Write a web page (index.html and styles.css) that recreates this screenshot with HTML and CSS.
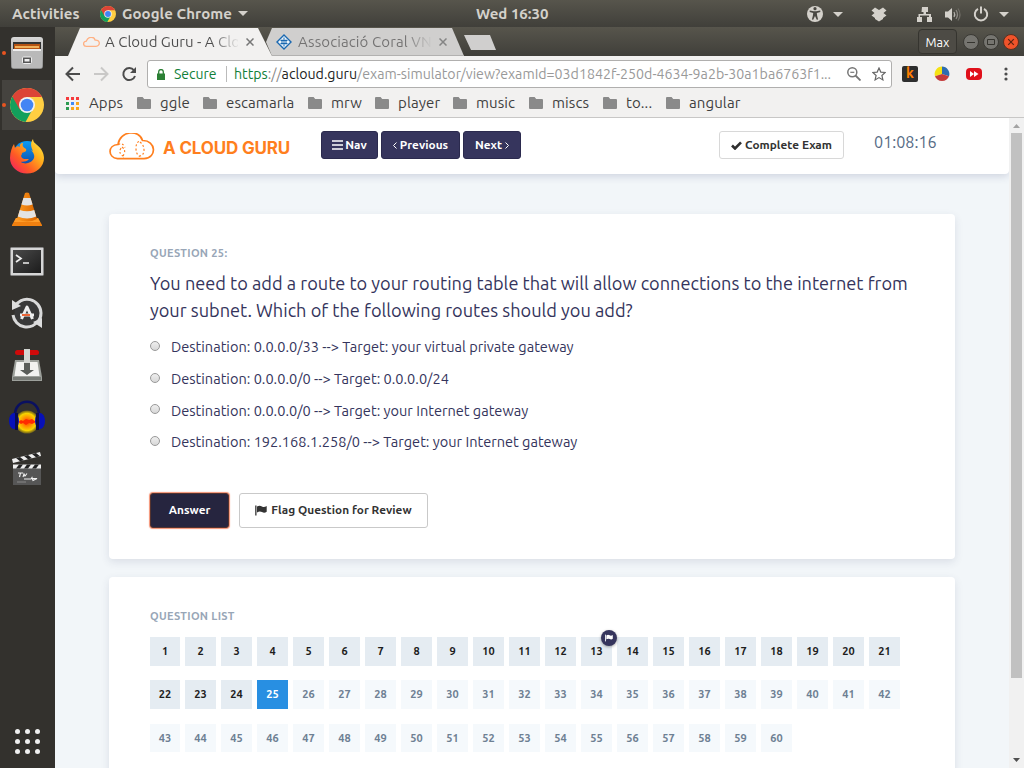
FILE: index.html
```html
<!DOCTYPE html>
<html lang="en">
<head>
<meta charset="utf-8">
<title>A Cloud Guru - Exam Simulator</title>
<link rel="stylesheet" href="styles.css">
</head>
<body>
<svg class="defs" width="0" height="0">
  <defs>
    <symbol id="chrome" viewBox="0 0 34 34">
      <circle cx="17" cy="17" r="17" fill="#ffce42"/>
      <path d="M17 17L2.3 8.5A17 17 0 0 0 15.5 33.9L23 20.5z" fill="#12a05c"/>
      <path d="M17 17L9.6 21.2L2.3 8.5A17 17 0 0 1 32 9H17z" fill="#dc4437"/>
      <circle cx="17" cy="17" r="8" fill="#f1f1f1"/>
      <circle cx="17" cy="17" r="6.3" fill="#4285f4"/>
    </symbol>
    <symbol id="folder" viewBox="0 0 14 12">
      <path d="M1 0h4.600l1.600 2H13a1 1 0 0 1 1 1v8a1 1 0 0 1-1 1H1a1 1 0 0 1-1-1V1a1 1 0 0 1 1-1z" fill="#8a8a8a"/>
    </symbol>
    <symbol id="flag" viewBox="0 0 12 11">
      <path d="M0.2 0.4h1.3v10.2H0.2zM2 1.6C4 .4 5.400 .6 7 1.500S10 2 11.700 1v5.800C10 7.900 8.600 7.900 7 7.100S4 6.300 2 7.500z" fill="currentColor"/>
    </symbol>
    <linearGradient id="steel" x1="0" y1="0" x2="0" y2="1"><stop offset="0" stop-color="#d8d8d8"/><stop offset="1" stop-color="#8b8b8b"/></linearGradient>
    <linearGradient id="fox" x1="1" y1="0" x2="0" y2="1"><stop offset="0" stop-color="#fff04a"/><stop offset=".35" stop-color="#ffb01c"/><stop offset=".65" stop-color="#ff5b24"/><stop offset="1" stop-color="#f0146e"/></linearGradient>
    <linearGradient id="globe" x1="0" y1="0" x2="0" y2="1"><stop offset="0" stop-color="#0a9cf5"/><stop offset="1" stop-color="#123f9c"/></linearGradient>
    <linearGradient id="cone" x1="0" y1="0" x2="1" y2="0"><stop offset="0" stop-color="#ff9a1e"/><stop offset="1" stop-color="#d96500"/></linearGradient>
    <linearGradient id="screen" x1="0" y1="0" x2="1" y2="1"><stop offset="0" stop-color="#4a4a4a"/><stop offset="1" stop-color="#1c1c1c"/></linearGradient>
    <radialGradient id="wave"><stop offset="0" stop-color="#ff3a00"/><stop offset=".45" stop-color="#ff9a00"/><stop offset=".75" stop-color="#f7d400"/><stop offset="1" stop-color="#c9a800" stop-opacity=".4"/></radialGradient>
  </defs>
</svg>

<header class="panel">
  <span class="panel-activities">Activities</span>
  <svg class="panel-chrome" width="16" height="16"><use href="#chrome"/></svg>
  <span class="panel-app">Google Chrome</span>
  <svg class="caret" width="10" height="5" viewBox="0 0 10 5"><path d="M0 0h10L5 5z" fill="#d4d1cb"/></svg>
  <span class="panel-clock">Wed 16:30</span>
  <div class="panel-tray">
    <svg width="211" height="22" viewBox="0 0 211 22">
      <g fill="#d4d1cb">
        <circle cx="9" cy="11" r="8"/>
        <path d="M27 9h10l-5 5z"/>
        <path d="M69 4.500l4 2.500 4-2.500 3.500 3-3 2.500 3 2.500-3.500 2.500v1l-4 2.500-4-2.500v-1l-3.500-2.500 3-2.500-3-2.500z"/>
        <path d="M116 4h6v5h-2v2h5v3h1v5h-5v-5h2v-1.500h-9V14h2v5h-5v-5h1.500v-3h5V9h-2z"/>
        <path d="M139 8.500h3l4-3.500v13l-4-3.500h-3z"/>
        <path d="M193 9h10l-5 5z"/>
      </g>
      <g fill="#4a4842"><circle cx="9" cy="5.700" r="1.600"/><path d="M3.800 7.500l4 .8h2.400l4-.8.200 1.400-3.600 1 .3 2.700 1 3.800-1.300.4L9 13l-1.800 3.800-1.300-.4 1-3.800.3-2.700-3.600-1z"/></g>
      <g fill="none" stroke="#b5b2ac" stroke-width="1.200"><path d="M148 9q1.500 2.500 0 5"/><path d="M150 7q3 4.500 0 9" stroke="#8d8a84"/><path d="M152 5.500q4 6 0 12" stroke="#706d66"/></g>
      <path d="M172 5.800a6.200 6.200 0 1 0 6 0M175 3.500v7" fill="none" stroke="#d4d1cb" stroke-width="2"/>
    </svg>
  </div>
</header>

<div class="desktop">
  <nav class="launcher">
    <div class="dock running">
      <svg width="34" height="34" viewBox="0 0 34 34"><rect x="1" y="1" width="32" height="32" rx="3" fill="url(#steel)"/><path d="M3 6h28v9H3z" fill="#333"/><path d="M4 8h26v7H4z" fill="#b65312"/><path d="M5 10h24v2H5z" fill="#f0b05a"/><path d="M3 13h28v3H3z" fill="#eee"/><path d="M2 15h30v16q0 1-1 1H3q-1 0-1-1z" fill="#b9b9b9"/><rect x="12.500" y="21" width="9" height="6.500" rx="1" fill="#555" stroke="#eee"/><path d="M14.500 23h5v2.500h-5z" fill="#eee"/></svg>
    </div>
    <div class="dock running active">
      <svg width="34" height="34"><use href="#chrome"/></svg>
    </div>
    <div class="dock dock-up">
      <svg width="34" height="36" viewBox="0 0 34 36"><circle cx="17" cy="17" r="14" fill="url(#globe)"/><path d="M23 1c0 3 2 4 4 6 4 3 7 8 7 13a17 15.500 0 0 1-34 0C0 14 2 9 4 6l1 4c2-2 3-2 5-1-1-2 1-4 3-4-1 3 0 4 3 6 1 2-1 3-4 4 0 2-1 2-1 3 1 4 5 3 8 3-3 4-7 2-8 3 4 3 11 1 13-4 1-3-1-6-3-8l2 1C21 9 20 5 23 1z" fill="url(#fox)"/></svg>
    </div>
    <div class="dock">
      <svg width="32" height="34" viewBox="0 0 32 34"><path d="M5 26h22l4 7v1H1v-1z" fill="#f08010"/><path d="M5 26h22l2 4H3z" fill="#ff9c28"/><path d="M14 1q2-1 4 0l8 26q-10 5-20 0z" fill="url(#cone)"/><path d="M12.400 6h7.200l2 6.500q-5.600 2-11.200 0zM8.800 18q7.200 2.500 14.400 0l2 6.500q-9 4-18.400 0z" fill="#e3e3e3"/></svg>
    </div>
    <div class="dock dock-down">
      <svg width="34" height="29" viewBox="0 0 34 29"><rect x=".5" y=".5" width="33" height="28" rx="1" fill="#d6d6d6" stroke="#888"/><rect x="3" y="3" width="28" height="23" fill="url(#screen)"/><path d="M6 8l5 3.500L6 15M13 16h6" fill="none" stroke="#eee" stroke-width="1.700"/></svg>
    </div>
    <div class="dock">
      <svg width="34" height="34" viewBox="0 0 34 34"><circle cx="17" cy="17" r="12.500" fill="#393939"/><path d="M4.500 11a14 14 0 0 1 26.500 6q0 5-3 9M29 24a14 14 0 0 1-26-5" fill="none" stroke="#d9d9d9" stroke-width="3"/><path d="M2 4v10l9-4zM32 32V22l-9 4z" fill="#ddd"/><path d="M11.500 23L17 11l5.500 12" fill="none" stroke="#eee" stroke-width="3" stroke-linejoin="round"/><path d="M10 19h14" stroke="#eee" stroke-width="3"/><path d="M12 19h8" stroke="#e95420" stroke-width="1.800"/></svg>
    </div>
    <div class="dock">
      <svg width="30" height="34" viewBox="0 0 30 34"><path d="M3 12h24l3 17v4H0v-4z" fill="#9da09b"/><path d="M4.500 14h21l2 14h-25z" fill="#f2f2f0"/><path d="M1 29h28v3H1z" fill="#777a75"/><rect x="3" y="2" width="24" height="5" rx="2.500" fill="#cf0a0a"/><path d="M12 1h6v20h-6z" fill="#d4d6d2"/><path d="M12 15h6v7h4l-7 5-7-5h4z" fill="#5a5d59"/></svg>
    </div>
    <div class="dock">
      <svg width="36" height="34" viewBox="0 0 36 34"><ellipse cx="18" cy="22" rx="12" ry="11.500" fill="url(#wave)"/><path d="M9 22l3-2 2 1 3-2 3 1 3-1 4 3-4 2-3-1-3 2-3-2-2 1z" fill="#ff2a00"/><path d="M6 16C5-3 31-3 30 16" fill="none" stroke="#0a1060" stroke-width="2.600"/><ellipse cx="5" cy="21" rx="5" ry="8" fill="#0710b8"/><ellipse cx="31" cy="21" rx="5" ry="8" fill="#0710b8"/><path d="M6 13h3v17H6zM27 13h3v17h-3z" fill="#0a0c4c"/></svg>
    </div>
    <div class="dock">
      <svg width="30" height="34" viewBox="0 0 30 34"><path d="M1 16h28v17H1z" fill="#565656"/><path d="M0 7l28-7 1 4L1 11z" fill="#eee"/><path d="M4 6l4 3.200 4-1-4-3.200zM12 4l4 3.200 4-1-4-3.200zM20 2l4 3.200 4-1-4-3.200z" fill="#222"/><path d="M1 12.500h28v4H1z" fill="#eee"/><path d="M4 16.500l3-4h4l-3 4zM12 16.500l3-4h4l-3 4zM20 16.500l3-4h4l-3 4z" fill="#222"/><path d="M6 21h5M8.500 21l-1 4M11 25l1-3 1 2 2-2.500M12 27h7l1-1.500 1 3 4-2h-6" fill="none" stroke="#f2f2f2" stroke-width="1.100"/><path d="M5 30h9" stroke="#888"/></svg>
    </div>
    <div class="apps-grid"><i></i><i></i><i></i><i></i><i></i><i></i><i></i><i></i><i></i></div>
  </nav>

  <div class="window">
    <div class="titlebar">
      <div class="tab tab-active">
        <svg width="17" height="10" viewBox="0 0 45 26"><path d="M9 24.500C-1 24-1 11 9 10.500 13-2 29-3 32 8c14-2 15 16 2 16.500z" fill="none" stroke="#ffb184" stroke-width="3.500"/></svg>
        <span class="tab-title tab-title-first">A Cloud Guru - A Clo</span>
        <svg class="tab-close" width="8" height="8" viewBox="0 0 8 8"><path d="M.5.5l7 7M7.500.5l-7 7" stroke="#777" stroke-width="1.500"/></svg>
      </div>
      <div class="tab tab-idle">
        <svg width="16" height="16" viewBox="0 0 16 16"><path d="M8 1l7 7-7 7-7-7z" fill="#eef6fc" stroke="#1a68b0" stroke-width="1.400"/><path d="M4.500 6.500h7M4.500 9.500h7M6 5.500v5M8 3.500v9M10 5.500v5" stroke="#1a68b0"/></svg>
        <span class="tab-title tab-title-second">Associació Coral VN</span>
        <svg class="tab-close" width="8" height="8" viewBox="0 0 8 8"><path d="M.5.5l7 7M7.500.5l-7 7" stroke="#858585" stroke-width="1.500"/></svg>
      </div>
      <div class="tab-new"></div>
      <div class="profile">Max</div>
      <div class="win-buttons">
        <svg width="16" height="16" viewBox="0 0 16 16"><circle cx="8" cy="8" r="7.500" fill="#767570" stroke="#3a3934"/><path d="M4 8.500h8" stroke="#35342f"/></svg>
        <svg width="16" height="16" viewBox="0 0 16 16"><circle cx="8" cy="8" r="7.500" fill="#767570" stroke="#3a3934"/><path d="M4.500 5.500h7v5h-7z" fill="none" stroke="#35342f"/></svg>
        <svg width="16" height="16" viewBox="0 0 16 16"><circle cx="8" cy="8" r="7.500" fill="#f0532a" stroke="#5a3020"/><path d="M5.200 5.200l5.600 5.600M10.800 5.200l-5.600 5.600" stroke="#5a2412" stroke-width="1.200"/></svg>
      </div>
    </div>

    <div class="toolbar">
      <div class="nav-icons">
        <svg width="72" height="16" viewBox="0 0 72 16" fill="none" stroke-width="2"><path d="M15 8H2M8 1.500L1.500 8 8 14.500" stroke="#4c4c4c"/><path d="M29 8h13M36 1.500L42.500 8 36 14.500" stroke="#c9c8c7"/><path d="M69 4.300A6 6 0 1 0 70 10" stroke="#4c4c4c"/><path d="M71 1v6h-6z" fill="#4c4c4c"/></svg>
      </div>
      <div class="omnibox">
        <svg width="8" height="11" viewBox="0 0 8 11"><path d="M0 4.500h8V11H0z" fill="#2c8035"/><path d="M1.700 5V2.800a2.300 2.300 0 0 1 4.600 0V5" fill="none" stroke="#2c8035" stroke-width="1.300"/></svg>
        <span class="secure">Secure</span>
        <span class="divider"></span>
        <span class="url"><span class="url-scheme">https</span><span class="url-slash">://</span><span class="url-host">acloud.guru</span><span class="url-path">/exam-simulator/view?examId=03d1842f-250d-4634-9a2b-30a1ba6763f1...</span></span>
        <svg class="zoom-icon" width="14" height="14" viewBox="0 0 14 14" fill="none" stroke="#757575"><circle cx="5.300" cy="5.300" r="4.500" stroke-width="1.500"/><path d="M3.300 5.300h4" stroke-width="1.200"/><path d="M8.500 8.500l5 5" stroke-width="1.800"/></svg>
        <svg class="star-icon" width="14" height="14" viewBox="0 0 14 14"><path d="M7 1l1.800 4.100 4.400.4-3.300 3 1 4.400L7 10.600l-3.900 2.300 1-4.400-3.300-3 4.400-.4z" fill="none" stroke="#666" stroke-width="1.200"/></svg>
      </div>
      <div class="extensions">
        <span class="ext-k">k</span>
        <svg width="16" height="16" viewBox="0 0 16 16"><path d="M8 8V.5A7.500 7.500 0 0 0 1 10.300z" fill="#f5e213"/><path d="M8 8V.5a7.500 7.500 0 0 1 7 9.800z" fill="#2e6cb0"/><path d="M8 8l7 2.300a7.500 7.500 0 0 1-14 0z" fill="#c53b3b"/></svg>
        <svg width="16" height="14" viewBox="0 0 16 14"><rect y="1" width="16" height="12" rx="4" fill="#e0101a"/><path d="M4 4l4 3-4 3zM8 4l4.500 3L8 10z" fill="#fff"/></svg>
        <svg width="4" height="14" viewBox="0 0 4 14"><g fill="#4c4c4c"><circle cx="2" cy="2" r="1.600"/><circle cx="2" cy="7" r="1.600"/><circle cx="2" cy="12" r="1.600"/></g></svg>
      </div>
    </div>

    <div class="bookmarks">
      <svg class="apps-icon" width="13" height="13" viewBox="0 0 13 13"><path d="M0 0h3v3H0zM5 0h3v3H5zM10 0h3v3h-3z" fill="#f53a3c"/><path d="M0 5h3v3H0z" fill="#2b9a50"/><path d="M5 5h3v3H5z" fill="#3f8af7"/><path d="M10 5h3v3h-3z" fill="#f9a51a"/><path d="M0 10h3v3H0z" fill="#2b9a50"/><path d="M5 10h3v3H5zM10 10h3v3h-3z" fill="#f9a51a"/></svg>
      <span class="bm bm-apps">Apps</span>
      <svg width="14" height="12"><use href="#folder"/></svg><span class="bm bm-ggle">ggle</span>
      <svg width="14" height="12"><use href="#folder"/></svg><span class="bm bm-escamarla">escamarla</span>
      <svg width="14" height="12"><use href="#folder"/></svg><span class="bm bm-mrw">mrw</span>
      <svg width="14" height="12"><use href="#folder"/></svg><span class="bm bm-player">player</span>
      <svg width="14" height="12"><use href="#folder"/></svg><span class="bm bm-music">music</span>
      <svg width="14" height="12"><use href="#folder"/></svg><span class="bm bm-miscs">miscs</span>
      <svg width="14" height="12"><use href="#folder"/></svg><span class="bm bm-to">to...</span>
      <svg width="14" height="12"><use href="#folder"/></svg><span class="bm bm-angular">angular</span>
    </div>

    <div class="viewport">
      <div class="page">
        <header class="site-header">
          <svg class="logo-cloud" width="46" height="27" viewBox="0 0 46 27" fill="none" stroke="#ff7f1e"><path d="M8.500 25.700C-1.500 24.500-1.500 12 9 11.500 11-2.500 30-4 33.500 7.500 47 7 48.500 25 35 25.700z" stroke-width="1.700"/><path d="M9 11.500q5-2 7 3M13 14q4 3 2 7t0 4M12 15q-3 5 2 8M30 8.500q-3 1-3 7t4 8M31 9q4 3 4 8t-4 6" stroke-width="1.200" stroke-dasharray="2 2"/></svg>
          <span class="logo-text">A CLOUD GURU</span>
          <div class="nav-buttons">
            <button class="btn btn-dark btn-nav"><svg width="11" height="10" viewBox="0 0 11 10"><path d="M0 1h11M0 5h11M0 9h11" stroke="#fff" stroke-width="1.600"/></svg><span>Nav</span></button>
            <button class="btn btn-dark btn-prev"><svg width="4" height="7" viewBox="0 0 4 7"><path d="M3.500.5l-3 3 3 3" fill="none" stroke="#fff"/></svg><span>Previous</span></button>
            <button class="btn btn-dark btn-next"><span>Next</span><svg width="4" height="7" viewBox="0 0 4 7"><path d="M.5.5l3 3-3 3" fill="none" stroke="#fff"/></svg></button>
          </div>
          <button class="btn btn-light btn-complete"><svg width="11" height="9" viewBox="0 0 11 9"><path d="M1 4.500l3 3L10 1.300" fill="none" stroke="#2f2f2f" stroke-width="2.600"/></svg><span>Complete Exam</span></button>
          <span class="timer">01:08:16</span>
        </header>

        <section class="card question-card">
          <h2 class="card-label">QUESTION 25:</h2>
          <p class="question">You need to add a route to your routing table that will allow connections to the internet from<br>your subnet. Which of the following routes should you add?</p>
          <ul class="options">
            <li><i class="radio"></i><span>Destination: 0.0.0.0/33 --&gt; Target: your virtual private gateway</span></li>
            <li><i class="radio"></i><span>Destination: 0.0.0.0/0 --&gt; Target: 0.0.0.0/24</span></li>
            <li><i class="radio"></i><span>Destination: 0.0.0.0/0 --&gt; Target: your Internet gateway</span></li>
            <li><i class="radio"></i><span>Destination: 192.168.1.258/0 --&gt; Target: your Internet gateway</span></li>
          </ul>
          <div class="actions">
            <button class="btn btn-answer">Answer</button>
            <button class="btn btn-light btn-flag"><svg width="12" height="11"><use href="#flag"/></svg><span>Flag Question for Review</span></button>
          </div>
        </section>

        <section class="card list-card">
          <h2 class="card-label">QUESTION LIST</h2>
          <div class="numbers">
            <a class="done">1</a><a class="done">2</a><a class="done">3</a><a class="done">4</a><a class="done">5</a><a class="done">6</a><a class="done">7</a><a class="done">8</a><a class="done">9</a><a class="done">10</a><a class="done">11</a><a class="done">12</a><a class="done flagged">13<b class="badge"><svg width="8" height="8" viewBox="0 0 12 11"><use href="#flag" width="12" height="11"/></svg></b></a><a class="done">14</a><a class="done">15</a><a class="done">16</a><a class="done">17</a><a class="done">18</a><a class="done">19</a><a class="done">20</a><a class="done">21</a>
          </div>
          <div class="numbers">
            <a class="done">22</a><a class="done">23</a><a class="done">24</a><a class="current">25</a><a>26</a><a>27</a><a>28</a><a>29</a><a>30</a><a>31</a><a>32</a><a>33</a><a>34</a><a>35</a><a>36</a><a>37</a><a>38</a><a>39</a><a>40</a><a>41</a><a>42</a>
          </div>
          <div class="numbers numbers-last">
            <a>43</a><a>44</a><a>45</a><a>46</a><a>47</a><a>48</a><a>49</a><a>50</a><a>51</a><a>52</a><a>53</a><a>54</a><a>55</a><a>56</a><a>57</a><a>58</a><a>59</a><a>60</a>
          </div>
        </section>
      </div>
      <div class="scrollbar">
        <svg width="7" height="4" viewBox="0 0 7 4"><path d="M0 4h7L3.500 0z" fill="#a3a3a3"/></svg>
        <div class="thumb"></div>
        <svg class="arrow-down" width="7" height="4" viewBox="0 0 7 4"><path d="M0 0h7L3.500 4z" fill="#505050"/></svg>
      </div>
    </div>
  </div>
</div>
</body>
</html>
```

FILE: styles.css
```css
* { box-sizing: border-box; }
body {
  margin: 0;
  width: 1024px;
  height: 768px;
  overflow: hidden;
  display: flex;
  flex-direction: column;
  font-family: Ubuntu, "Noto Sans", sans-serif;
  font-size: 15px;
}
.defs { position: absolute; }
svg { display: block; flex: none; }
span { white-space: pre; }

/* Top panel */
.panel {
  height: 27px;
  flex: none;
  display: flex;
  align-items: center;
  padding-left: 12px;
  background: linear-gradient(#57554c, #403f3a);
  color: #d4d1cb;
  font-weight: 700;
  line-height: 27px;
}
.panel-activities { width: 88px; letter-spacing: .1px; }
.panel-chrome { margin-right: 6px; }
.panel-app { width: 116px; letter-spacing: .08px; }
.panel-clock { margin-left: 228px; width: 72px; }
.panel-tray { margin-left: 258px; height: 22px; }

.desktop { flex: 1; display: flex; min-height: 0; }

/* Launcher */
.launcher {
  width: 55px;
  background: #33312d;
  display: flex;
  flex-direction: column;
}
.dock {
  height: 52px;
  width: 54px;
  display: grid;
  place-items: center;
  position: relative;
}
.dock-up { padding-bottom: 2px; }
.dock-down { padding-top: 1px; }
.active {
  background: linear-gradient(#45433f, #45433f) center / 50px 50px no-repeat;
}
.running::before {
  content: "";
  position: absolute;
  left: 2px;
  top: 24px;
  width: 4px;
  height: 4px;
  border-radius: 50%;
  background: #e95420;
}
.apps-grid {
  margin: auto auto 14px 15px;
  display: grid;
  grid-template-columns: repeat(3, 5px);
  gap: 5px;
}
.apps-grid i { height: 5px; border-radius: 50%; background: #f0f0f0; }

/* Browser window */
.window { flex: 1; display: flex; flex-direction: column; min-width: 0; }
.titlebar {
  height: 29px;
  flex: none;
  display: flex;
  padding-top: 1px;
  background: linear-gradient(#57554c, #403f3a);
}
.tab { height: 28px; display: flex; align-items: center; }
.tab-active {
  width: 204px;
  margin-left: 13px;
  padding-left: 15px;
  background: #f2f1f0;
  clip-path: polygon(0 100%, 12px 0, 190px 0, 204px 100%);
  z-index: 1;
}
.tab-idle {
  width: 198px;
  margin-left: -6px;
  padding-left: 10px;
  background: #d0cfce;
  border-bottom: 1px solid #b2b1b0;
  clip-path: polygon(0 50%, 6px 0, 186px 0, 198px 100%, 6px 100%);
}
.tab-title { overflow: hidden; line-height: 26px; }
.tab-title-first {
  width: 133px;
  margin-left: 5px;
  background: linear-gradient(90deg, #4c4c4c 80%, rgba(76, 76, 76, .05));
  background-clip: text;
  color: transparent;
}
.tab-title-second {
  width: 133px;
  margin-left: 6px;
  letter-spacing: .1px;
  background: linear-gradient(90deg, #737272 80%, rgba(115, 114, 114, .05));
  background-clip: text;
  color: transparent;
}
.tab-close { margin-left: 8px; }
.tab-new {
  width: 32px;
  height: 15px;
  margin: 7px 0 0 0;
  background: #d0cfce;
  clip-path: polygon(0 0, 26px 0, 100% 100%, 7px 100%);
}
.profile {
  width: 39px;
  height: 25px;
  margin: 1px 6px 0 auto;
  border: 1px solid #35342f;
  border-radius: 4px;
  background: #4d4b45;
  color: #fff;
  font-size: 12.7px;
  line-height: 24px;
  text-align: center;
}
.win-buttons { display: flex; gap: 4px; padding: 6px 5px 0 0; }

.toolbar {
  height: 36px;
  flex: none;
  display: flex;
  align-items: center;
  background: #f2f1f0;
}
.nav-icons { width: 92px; padding-left: 10px; }
.omnibox {
  width: 745px;
  height: 28px;
  display: flex;
  align-items: center;
  padding-left: 9px;
  background: #fff;
  border: 1px solid #b0afae;
  border-radius: 3px;
  line-height: 26px;
}
.secure { width: 42px; margin-left: 9px; font-size: 14px; color: #128039; }
.divider { width: 1px; height: 16px; margin: 0 7px 0 10px; background: #bbb; }
.url { width: 608px; font-size: 14.2px; color: #999; }
.url-scheme { color: #128039; }
.url-slash { color: #888; }
.url-host { color: #222; }
.zoom-icon { margin-left: 5px; }
.star-icon { margin-left: 11px; }
.extensions { display: flex; align-items: center; margin-left: 10px; }
.ext-k {
  width: 16px;
  height: 16px;
  margin-right: 16px;
  border-radius: 2px;
  background: #2e2e2e;
  color: #ff7e00;
  font-weight: 700;
  font-size: 14px;
  line-height: 15px;
  text-align: center;
}
.extensions svg { margin-right: 16px; }
.extensions svg:nth-of-type(2) { margin-right: 22px; }
.extensions svg:last-child { margin-right: 0; }

.bookmarks {
  height: 26px;
  flex: none;
  display: flex;
  align-items: center;
  padding: 0 0 3px 11px;
  background: #f2f1f0;
  border-bottom: 1px solid #c8c7c6;
  color: #3f3f3f;
  letter-spacing: .1px;
}
.bm { margin-left: 9px; line-height: 22px; }
.bm-apps { width: 39px; margin-left: 10px; }
.bm-ggle { width: 34px; }
.bm-escamarla { width: 73px; }
.bm-mrw { width: 35px; }
.bm-player { width: 46px; }
.bm-music { width: 44px; }
.bm-miscs { width: 42px; }
.bm-to { width: 31px; }
.bookmarks svg { margin-left: 9px; }
.bookmarks .apps-icon { margin-left: 0; }

/* Page */
.viewport { flex: 1; display: flex; min-height: 0; }
.page { width: 954px; background: #f2f6f9; overflow: hidden; }
.site-header {
  height: 56px;
  display: flex;
  align-items: center;
  padding: 0 0 2px 54px;
  background: #fff;
  border-radius: 0 0 4px 4px;
  box-shadow: 0 2px 8px rgba(50, 60, 110, .2);
}
.logo-cloud { margin-top: 3px; }
.logo-text {
  width: 158px;
  margin: 6px 0 0 8px;
  font: 700 17px/20px Inter, sans-serif;
  letter-spacing: -.17px;
  color: #ff7f1e;
}
.nav-buttons { display: flex; gap: 3px; }
.btn {
  height: 28px;
  display: flex;
  align-items: center;
  justify-content: center;
  padding: 0;
  border-radius: 3px;
  font: 700 11.8px/14px Ubuntu, "Noto Sans", sans-serif;
  letter-spacing: .03px;
}
.btn-dark { color: #fff; background: #36355d; border: 1px solid #2b2a4e; }
.btn-light { color: #333; background: #fff; border: 1px solid #d8d8d8; }
.btn-nav { width: 57px; gap: 2px; }
.btn-prev { width: 79px; gap: 3px; }
.btn-next { width: 58px; gap: 3px; }
.btn-complete { width: 125px; margin-left: 198px; gap: 3px; }
.timer { margin: -6px 0 0 30px; font-size: 16.2px; color: #566b85; }

.card {
  width: 846px;
  margin-left: 54px;
  padding-left: 41px;
  background: #fff;
  border-radius: 4px;
  box-shadow: 0 3px 9px rgba(50, 60, 100, .12);
}
.question-card { height: 345px; margin-top: 40px; padding-top: 32px; }
.list-card { height: 240px; margin-top: 18px; padding-top: 32px; }
.card-label {
  margin: 0;
  font-size: 11px;
  line-height: 14px;
  letter-spacing: .33px;
  color: #98a6b7;
}
.question {
  margin: 10px 0 0;
  font-size: 18.18px;
  line-height: 27px;
  color: #34345c;
  white-space: nowrap;
}
.options {
  margin: 7px 0 0;
  padding: 0;
  list-style: none;
  color: #34345c;
  font-size: 14.56px;
}
.options li { display: flex; align-items: center; height: 31.7px; }
.radio {
  width: 10px;
  height: 10px;
  margin: -2px 11px 0 0;
  border: 1px solid #999;
  border-radius: 50%;
  background: linear-gradient(#eee, #d8d8d8);
}
.actions { display: flex; gap: 10px; margin-top: 35px; }
.btn-answer {
  width: 79px;
  height: 35px;
  color: #fff;
  background: #26253f;
  border: 1px solid #55332f;
  box-shadow: 0 0 1px 1px rgba(240, 110, 70, .75);
}
.btn-flag { width: 189px; height: 35px; gap: 4px; border-color: #c9c9c9; }

.numbers {
  display: grid;
  grid-template-columns: 30px repeat(20, 31px);
  column-gap: 5px;
  height: 29px;
  margin-top: 14px;
}
.numbers a {
  background: #f5f9fc;
  color: #6e8093;
  font-size: 11px;
  font-weight: 700;
  line-height: 28px;
  text-align: center;
}
.numbers .done { background: #e5ecf2; color: #1d1d1d; }
.numbers .current { background: #288fe2; color: #fff; }
.numbers-last { height: 28px; margin-top: 15px; }
.flagged { position: relative; }
.badge {
  position: absolute;
  top: -7px;
  right: -5px;
  width: 16px;
  height: 16px;
  display: grid;
  place-items: center;
  border-radius: 50%;
  background: #36355d;
  color: #fff;
  box-shadow: 0 1px 3px rgba(0, 0, 0, .35);
}

.scrollbar {
  width: 15px;
  display: flex;
  flex-direction: column;
  align-items: center;
  padding: 6px 0;
  background: #f1f1f1;
}
.thumb { width: 11px; height: 545px; margin-top: 5px; background: #c1c1c1; }
.arrow-down { margin-top: auto; }
```
